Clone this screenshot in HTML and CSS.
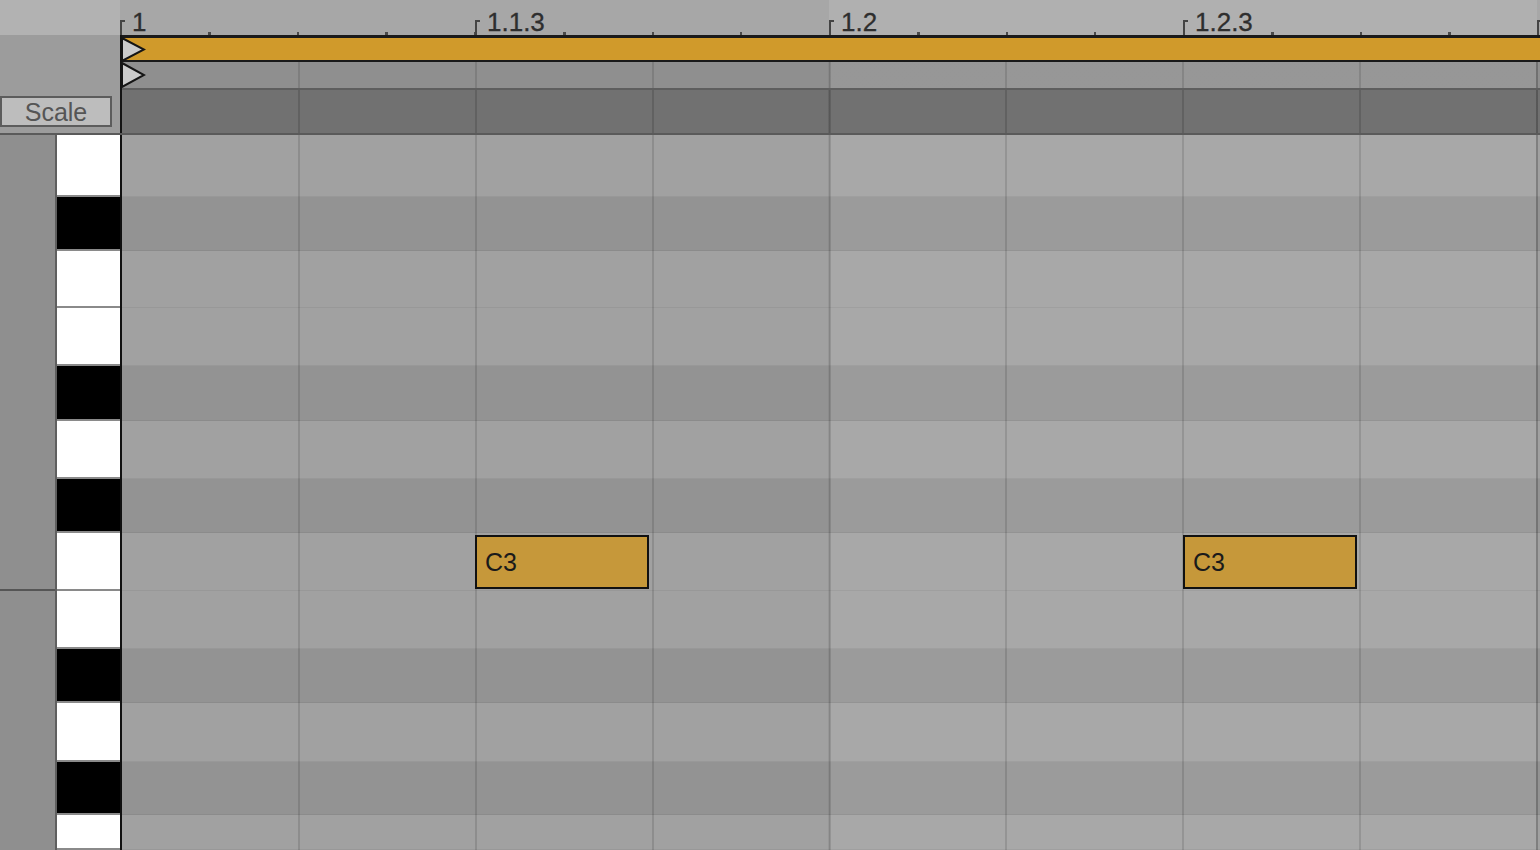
FILE: index.html
```html
<!DOCTYPE html>
<html lang="en">
<head>
  <meta charset="UTF-8" />
  <title>Piano Roll</title>
  <link rel="stylesheet" href="styles.css">
</head>
<body>
  <div class="editor">
    <div class="ruler">
      <div class="corner"></div>
      <div class="ruler-track">
        <div class="beat"><span class="tick"></span><span class="label">1</span></div>
        <div class="beat"><span class="tick"></span><span class="label">1.1.3</span></div>
        <div class="beat alt"><span class="tick"></span><span class="label">1.2</span></div>
        <div class="beat alt"><span class="tick"></span><span class="label">1.2.3</span></div>
        <div class="beat last"><span class="tick"></span></div>
      </div>
    </div>

    <div class="header">
      <div class="header-left">
        <button class="scale-btn">Scale</button>
      </div>
      <div class="header-track">
        <div class="loop-bar">
          <svg class="marker" width="24" height="25" viewBox="0 0 24 25"><polygon points="0,1 22,12.5 0,24" fill="#cbcbcb" stroke="#151515" stroke-width="2"/></svg>
        </div>
        <div class="marker-row">
          <svg class="marker" width="24" height="26" viewBox="0 0 24 26"><polygon points="0,1 22,13 0,25" fill="#cbcbcb" stroke="#151515" stroke-width="2"/></svg>
        </div>
        <div class="velocity-row"></div>
      </div>
    </div>

    <div class="roll">
      <div class="octaves">
        <div class="octave"></div>
        <div class="octave"></div>
      </div>
      <div class="keys rows">
        <div class="key"></div>
        <div class="key black"></div>
        <div class="key"></div>
        <div class="key"></div>
        <div class="key black"></div>
        <div class="key"></div>
        <div class="key black"></div>
        <div class="key"></div>
        <div class="key"></div>
        <div class="key black"></div>
        <div class="key"></div>
        <div class="key black"></div>
        <div class="key"></div>
      </div>
      <div class="lanes rows">
        <div class="lane"></div>
        <div class="lane black"></div>
        <div class="lane"></div>
        <div class="lane"></div>
        <div class="lane black"></div>
        <div class="lane"></div>
        <div class="lane black"></div>
        <div class="lane">
          <div class="note" style="left: 353px;">C3</div>
          <div class="note" style="left: 1061px;">C3</div>
        </div>
        <div class="lane"></div>
        <div class="lane black"></div>
        <div class="lane"></div>
        <div class="lane black"></div>
        <div class="lane"></div>
      </div>
    </div>
  </div>
</body>
</html>
```

FILE: styles.css
```css
body {
  margin: 0;
  background: #9a9a9a;
  font-family: "Liberation Sans", Arial, sans-serif;
  overflow: hidden;
}
.editor {
  width: 1540px;
  height: 850px;
  display: flex;
  flex-direction: column;
}

/* ruler */
.ruler {
  display: flex;
  height: 35px;
  flex: none;
}
.corner {
  width: 120px;
  flex: none;
  background: #b2b2b2;
}
.ruler-track {
  flex: 1;
  min-width: 0;
  display: flex;
}
.beat {
  flex: 0 0 354px;
  display: flex;
  align-items: flex-start;
  background: repeating-linear-gradient(90deg, #4a4a4a 0 2px, transparent 2px 88.5px) left bottom / 100% 3px no-repeat, #a7a7a7;
}
.beat:first-child {
  flex-basis: 355px;
}
.beat.alt {
  background-color: #b0b0b0;
}
.beat.last {
  flex: 1 1 0;
  min-width: 0;
}
.tick {
  align-self: flex-end;
  width: 5px;
  height: 15px;
  border-left: 2px solid #444;
  border-top: 2px solid #444;
  box-sizing: border-box;
  flex: none;
}
.label {
  font-size: 26px;
  line-height: 26px;
  margin-top: 9px;
  color: #2e2e2e;
  margin-left: 7px;
  -webkit-text-stroke: 0.3px #2e2e2e;
}

/* header */
.header {
  display: flex;
  height: 98px;
  flex: none;
}
.header-left {
  width: 120px;
  flex: none;
  background: #9c9c9c;
  display: flex;
  align-items: flex-end;
  padding-bottom: 6px;
  box-sizing: border-box;
}
.scale-btn {
  width: 112px;
  height: 31px;
  padding: 0;
  background: #bdbdbd;
  border: 2px solid #5c5c5c;
  font-family: "Liberation Sans", Arial, sans-serif;
  font-size: 25px;
  color: #555;
}
.header-track {
  flex: 1;
  display: flex;
  flex-direction: column;
  border-left: 2px solid #141414;
}
.loop-bar {
  height: 27px;
  flex: none;
  box-sizing: border-box;
  background: #d09a2b;
  border-top: 3px solid #1a1a1a;
  border-bottom: 2px solid #1a1a1a;
  display: flex;
  align-items: center;
}
.marker {
  display: block;
  flex: none;
}
.marker-row,
.lane {
  background-image:
    repeating-linear-gradient(90deg, transparent 0 174.9px, rgba(0, 0, 0, 0.12) 174.9px 176.9px),
    linear-gradient(90deg, transparent 706px, rgba(0, 0, 0, 0.1) 706px 708px, transparent 708px 1414px, rgba(0, 0, 0, 0.1) 1414px 1416px, transparent 1416px),
    linear-gradient(90deg, transparent 706px, rgba(255, 255, 255, 0.07) 706px 1414px, transparent 1414px);
  background-position: 1px 0, 0 0, 0 0;
}
.marker-row {
  height: 28px;
  flex: none;
  box-sizing: border-box;
  background-color: #8f8f8f;
  border-bottom: 2px solid #5e5e5e;
  display: flex;
  align-items: center;
}
.velocity-row {
  flex: 1;
  background-color: #717171;
  background-image:
    repeating-linear-gradient(90deg, transparent 0 174.9px, rgba(0, 0, 0, 0.14) 174.9px 176.9px),
    linear-gradient(90deg, transparent 706px, rgba(0, 0, 0, 0.1) 706px 708px, transparent 708px 1414px, rgba(0, 0, 0, 0.1) 1414px 1416px, transparent 1416px);
  background-position: 1px 0, 0 0;
}

/* piano roll */
.roll {
  flex: 1;
  display: flex;
  border-top: 2px solid #5a5a5a;
  min-height: 0;
}
.rows {
  display: grid;
  grid-template-rows: 62px 54px 57px 58px 55px 58px 54px 58px 58px 54px 59px 53px 1fr;
}
.octaves {
  width: 55px;
  flex: none;
  background: #8f8f8f;
  border-right: 2px solid #5f5f5f;
  display: grid;
  grid-template-rows: 456px 1fr;
}
.octave:first-child {
  border-bottom: 2px solid #555;
}
.keys {
  width: 63px;
  flex: none;
  border-right: 2px solid #111;
}
.key {
  background: #fff;
  border-bottom: 2px solid #8a8a8a;
  box-sizing: border-box;
}
.key.black {
  background: #000;
}
.lanes {
  flex: 1;
}
.lane {
  position: relative;
  background-color: #a1a1a1;
  border-bottom: 1px solid rgba(0, 0, 0, 0.05);
  box-sizing: border-box;
}
.lane.black {
  background-color: #939393;
}
.note {
  position: absolute;
  top: 2px;
  width: 174px;
  height: 54px;
  box-sizing: border-box;
  background: #c6983a;
  border: 2px solid #111;
  padding-left: 8px;
  display: flex;
  align-items: center;
  font-size: 25px;
  color: #1a1a1a;
}
```
